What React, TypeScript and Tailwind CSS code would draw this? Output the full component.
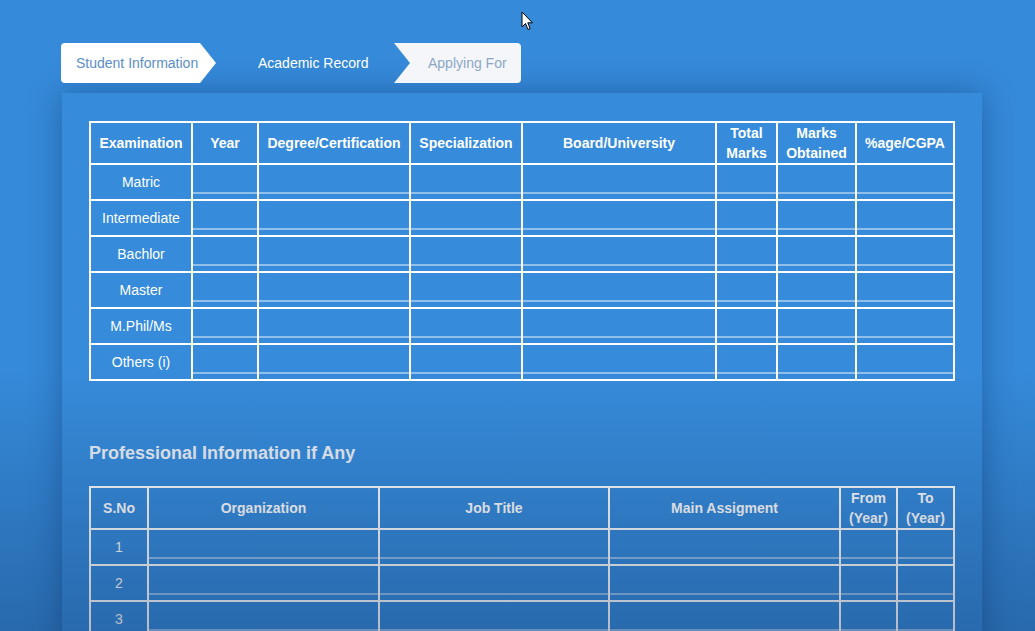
import React from "react";

const eduCols = [102, 66, 152, 112, 194, 61, 79, 98];
const eduHeads: React.ReactNode[] = [
  "Examination",
  "Year",
  "Degree/Certification",
  "Specialization",
  "Board/University",
  <>Total<br />Marks</>,
  <>Marks<br />Obtained</>,
  "%age/CGPA",
];
const eduRows = ["Matric", "Intermediate", "Bachlor", "Master", "M.Phil/Ms", "Others (i)"];

const proCols = [58, 231, 230, 231, 57, 57];
const proHeads: React.ReactNode[] = [
  "S.No",
  "Organization",
  "Job Title",
  "Main Assigment",
  <>From<br />(Year)</>,
  <>To<br />(Year)</>,
];

function InputCell() {
  return (
    <td className="border-2 border-white p-0 align-top">
      <div className="h-[29px] border-b-2 border-white/45"></div>
    </td>
  );
}

function Table({
  cols,
  heads,
  rows,
}: {
  cols: number[];
  heads: React.ReactNode[];
  rows: string[];
}) {
  return (
    <table className="w-[864px] border-collapse table-fixed text-white">
      <colgroup>
        {cols.map((w, i) => (
          <col key={i} style={{ width: w }} />
        ))}
      </colgroup>
      <thead>
        <tr className="h-[42px]">
          {heads.map((h, i) => (
            <th
              key={i}
              className="border-2 border-white p-0 text-center text-[14px] font-bold leading-[20px]"
            >
              {h}
            </th>
          ))}
        </tr>
      </thead>
      <tbody>
        {rows.map((r) => (
          <tr key={r} className="h-[36px]">
            <td className="border-2 border-white p-0 text-center text-[14px]">{r}</td>
            {cols.slice(1).map((_, i) => (
              <InputCell key={i} />
            ))}
          </tr>
        ))}
      </tbody>
    </table>
  );
}

function Cursor() {
  return (
    <svg
      className="absolute left-[521px] top-[11px]"
      width="14"
      height="21"
      viewBox="0 0 14 21"
    >
      <path
        d="M1 1 L1 16 L4.5 12.5 L7 18.5 L9.2 17.6 L6.8 11.8 L11.5 11.8 Z"
        fill="#fff"
        stroke="#000"
        strokeWidth="1"
        strokeLinejoin="round"
      />
    </svg>
  );
}

export default function App() {
  return (
    <div
      className="relative h-[631px] w-[1035px] overflow-hidden bg-[#358ad9] text-white"
      style={{ fontFamily: '"Liberation Sans", Arial, sans-serif' }}
    >
      <Cursor />
      {/* tabs */}
      <div className="relative z-10 flex pl-[61px] pt-[43px] text-[14px]">
        <div className="flex h-[40px] w-[155px] items-center rounded-l-[4px] bg-white pl-[15px] text-[#5b8ec6] [clip-path:polygon(0_0,calc(100%_-_16px)_0,100%_50%,calc(100%_-_16px)_100%,0_100%)]">
          Student Information
        </div>
        <div className="flex h-[40px] w-[178px] items-center pl-[42px] text-white">
          Academic Record
        </div>
        <div className="flex h-[40px] w-[127px] items-center rounded-r-[4px] bg-[#f4f6f9] pl-[34px] text-[#8ea8c6] [clip-path:polygon(0_0,100%_0,100%_100%,0_100%,16px_50%)]">
          Applying For
        </div>
      </div>
      {/* card */}
      <div className="ml-[62px] mt-[10px] h-[560px] w-[920px] bg-[#368bda] px-[27px] pt-[28px] shadow-[0_0_30px_rgba(0,30,80,0.35)]">
        <Table cols={eduCols} heads={eduHeads} rows={eduRows} />
        <h2 className="mt-[62px] text-[18px] font-bold leading-[20px] text-[#e9eff6]">
          Professional Information if Any
        </h2>
        <div className="mt-[23px]">
          <Table cols={proCols} heads={proHeads} rows={["1", "2", "3"]} />
        </div>
      </div>
      {/* video darkening overlay */}
      <div className="pointer-events-none absolute inset-x-0 bottom-0 h-[260px] bg-gradient-to-b from-transparent to-[rgba(10,30,70,0.3)]"></div>
    </div>
  );
}
